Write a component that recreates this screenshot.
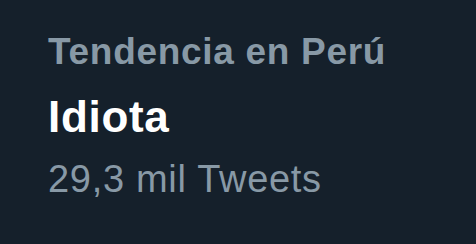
export default function App() {
  return (
    <div className="w-[476px] h-[244px] bg-[#15202b] pl-[48px] pt-[30px]" style={{ fontFamily: "'Liberation Sans', Arial, sans-serif" }}>
      <div className="text-[37px] leading-[44px] font-bold tracking-[0.7px] text-[#8899a6]">Tendencia en Perú</div>
      <div className="mt-[17px] text-[44px] leading-[52px] font-bold tracking-[0.7px] text-white">Idiota</div>
      <div className="mt-[14px] text-[38px] leading-[44px] tracking-[0.7px] text-[#8899a6]">29,3 mil Tweets</div>
    </div>
  );
}
